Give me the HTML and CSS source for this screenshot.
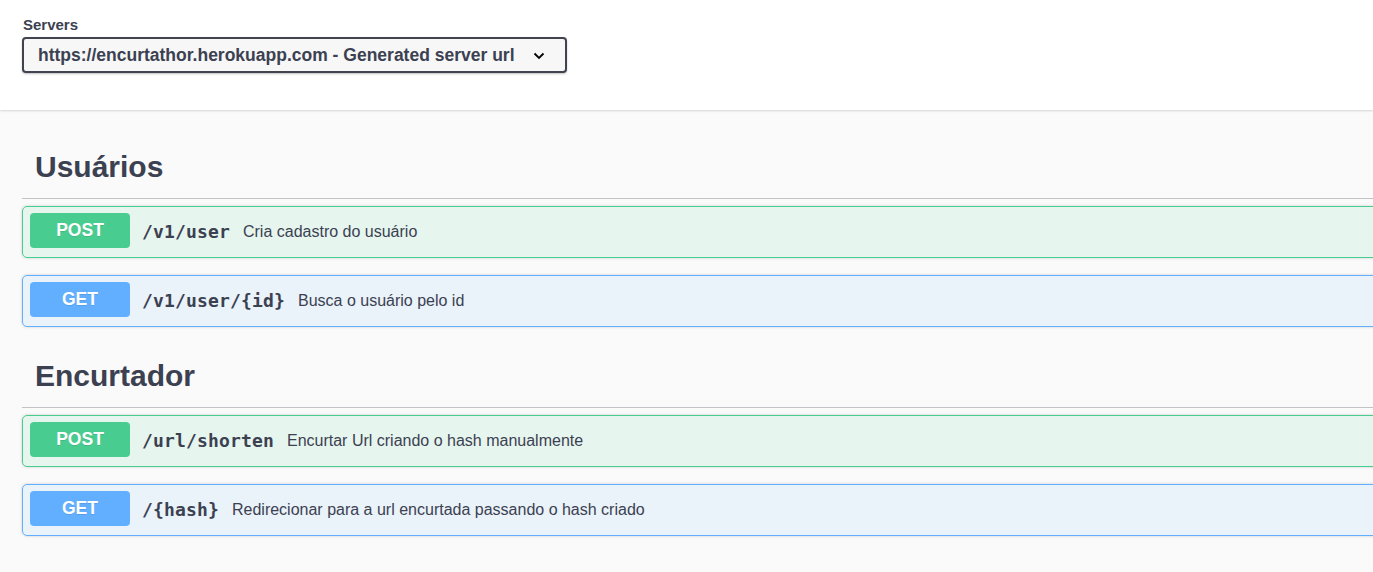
FILE: index.html
```html
<!DOCTYPE html>
<html lang="pt">
<head>
<meta charset="utf-8">
<title>Swagger UI</title>
<link rel="stylesheet" href="styles.css">
</head>
<body>
<div class="scheme-container">
  <div class="servers">
    <span class="servers-title">Servers</span>
    <div class="select">
      <span class="select-text">https://encurtathor.herokuapp.com - Generated server url</span>
      <svg class="chevron" width="12" height="8" viewBox="0 0 12 8"><path d="M1.5 1.5 L6 6 L10.5 1.5" fill="none" stroke="#000" stroke-width="1.8"/></svg>
    </div>
  </div>
</div>
<main class="wrapper">
  <section class="tag-section">
    <h3 class="opblock-tag">Usuários</h3>
    <div class="opblock post">
      <span class="method">POST</span>
      <span class="path">/v1/user</span>
      <span class="desc">Cria cadastro do usuário</span>
    </div>
    <div class="opblock get">
      <span class="method">GET</span>
      <span class="path">/v1/user/{id}</span>
      <span class="desc">Busca o usuário pelo id</span>
    </div>
  </section>
  <section class="tag-section">
    <h3 class="opblock-tag">Encurtador</h3>
    <div class="opblock post">
      <span class="method">POST</span>
      <span class="path">/url/shorten</span>
      <span class="desc">Encurtar Url criando o hash manualmente</span>
    </div>
    <div class="opblock get">
      <span class="method">GET</span>
      <span class="path">/{hash}</span>
      <span class="desc">Redirecionar para a url encurtada passando o hash criado</span>
    </div>
  </section>
</main>
</body>
</html>
```

FILE: styles.css
```css
html, body {
  margin: 0;
  padding: 0;
}
body {
  background: #fafafa;
  font-family: "Liberation Sans", Arial, sans-serif;
  color: #3b4151;
  overflow: hidden;
}
.scheme-container {
  background: #fff;
  height: 110px;
  box-sizing: border-box;
  padding: 16px 22px 0;
  box-shadow: 0 1px 2px 0 rgba(0, 0, 0, 0.15);
  margin-bottom: 25px;
}
.servers {
  display: flex;
  flex-direction: column;
  align-items: flex-start;
}
.servers-title {
  font-size: 15px;
  font-weight: 700;
  line-height: 18px;
  margin-bottom: 3px;
  margin-left: 1px;
}
.select {
  width: 545px;
  height: 36px;
  box-sizing: border-box;
  border: 2px solid #41444e;
  border-radius: 4px;
  background: #f7f7f7;
  box-shadow: 0 1px 2px 0 rgba(0, 0, 0, 0.25);
  display: flex;
  align-items: center;
  padding: 0 0 0 14px;
}
.select-text {
  font-size: 17.5px;
  font-weight: 700;
  color: #3b4151;
  white-space: nowrap;
}
.chevron {
  margin-left: 18px;
  margin-top: 1px;
}
.wrapper {
  width: 1420px;
  padding: 0 0 0 22px;
}
.opblock-tag {
  margin: 0 0 7px;
  padding: 13px 0 12px 13px;
  font-size: 30px;
  line-height: 38px;
  font-weight: 700;
  color: #3b4151;
  border-bottom: 1px solid rgba(59, 65, 81, 0.3);
}
.opblock {
  display: flex;
  align-items: flex-start;
  height: 52px;
  box-sizing: border-box;
  padding: 6px 7px 0;
  border: 1px solid;
  border-radius: 5px;
  margin-bottom: 17px;
  box-shadow: 0 0 3px rgba(0, 0, 0, 0.19);
}
.opblock.post {
  background: rgba(73, 204, 144, 0.1);
  border-color: #49cc90;
}
.opblock.get {
  background: rgba(97, 175, 254, 0.1);
  border-color: #61affe;
}
.method {
  width: 100px;
  height: 35px;
  line-height: 35px;
  text-align: center;
  border-radius: 4px;
  color: #fff;
  font-size: 17.5px;
  font-weight: 700;
  text-shadow: 0 1px 0 rgba(0, 0, 0, 0.1);
}
.post .method {
  background: #49cc90;
}
.get .method {
  background: #61affe;
}
.path {
  font-family: "DejaVu Sans Mono", "Liberation Mono", monospace;
  font-weight: 700;
  font-size: 18px;
  line-height: 37px;
  letter-spacing: 0.16px;
  color: #3b4151;
  padding: 0 13px 0 12px;
}
.desc {
  font-size: 16px;
  line-height: 37px;
  color: #3b4151;
}
```
